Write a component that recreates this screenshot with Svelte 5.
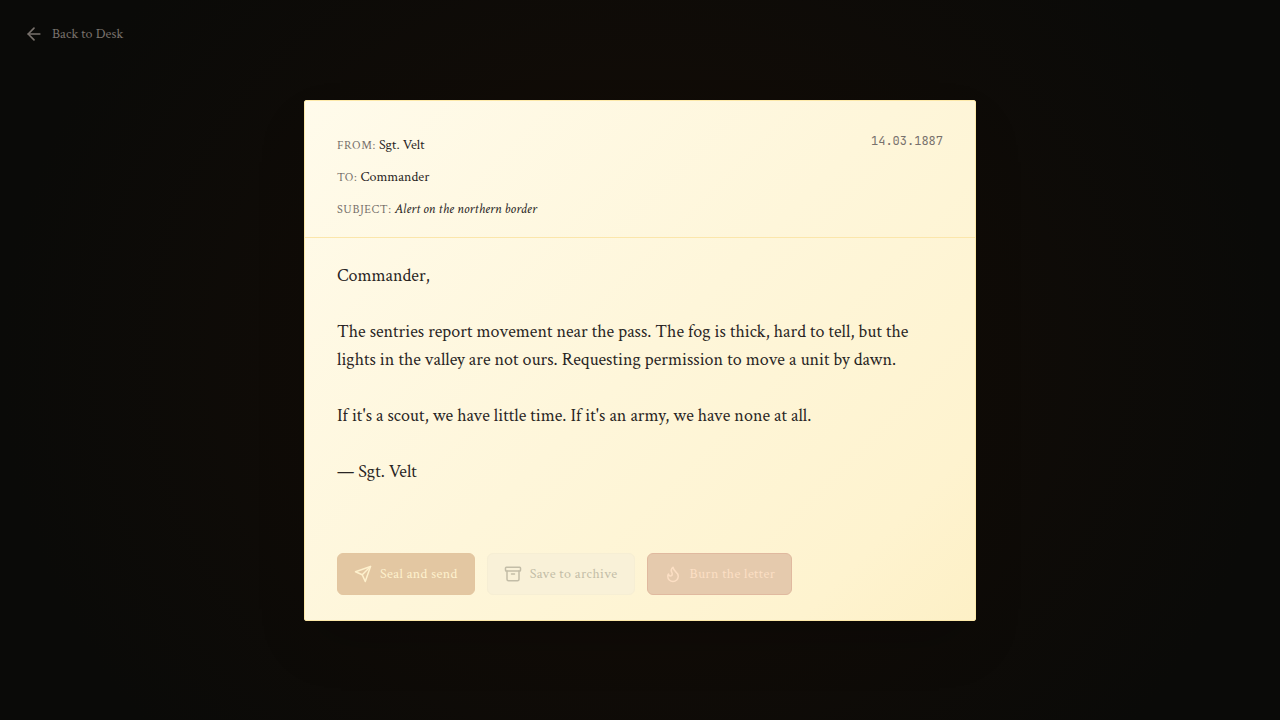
<script>
  const fields = [
    { label: 'From:', value: 'Sgt. Velt' },
    { label: 'To:', value: 'Commander' },
    { label: 'Subject:', value: 'Alert on the northern border', subject: true },
  ];

  const letter = `Commander,

The sentries report movement near the pass. The fog is thick, hard to tell, but the lights in the valley are not ours. Requesting permission to move a unit by dawn.

If it's a scout, we have little time. If it's an army, we have none at all.

— Sgt. Velt`;

  const actions = [
    { kind: 'send', label: 'Seal and send', paths: ['m22 2-7 20-4-9-9-4Z', 'M22 2 11 13'] },
    {
      kind: 'archive',
      label: 'Save to archive',
      paths: ['M3 3h18a1 1 0 0 1 1 1v3a1 1 0 0 1-1 1H3a1 1 0 0 1-1-1V4a1 1 0 0 1 1-1Z', 'M4 8v11a2 2 0 0 0 2 2h12a2 2 0 0 0 2-2V8', 'M10 12h4'],
    },
    {
      kind: 'burn',
      label: 'Burn the letter',
      paths: ['M8.5 14.5A2.5 2.5 0 0 0 11 12c0-1.38-.5-2-1-3-1.072-2.143-.224-4.054 2-6 .5 2.5 2 4.9 4 6.5 2 1.6 3 3.5 3 5.5a7 7 0 1 1-14 0c0-1.153.433-2.294 1-3a2.5 2.5 0 0 0 2.5 2.5z'],
    },
  ];
</script>

<div class="page">
  <button class="back" type="button">
    <svg viewBox="0 0 24 24" aria-hidden="true"><path d="m12 19-7-7 7-7" /><path d="M19 12H5" /></svg>
    Back to Desk
  </button>

  <main class="letter">
    <header>
      <div class="fields">
        {#each fields as field}
          <p><span class="label">{field.label}</span> <span class="value" class:subject={field.subject}>{field.value}</span></p>
        {/each}
      </div>
      <time datetime="1887-03-14">14.03.1887</time>
    </header>

    <div class="body">{letter}</div>

    <footer>
      {#each actions as action}
        <button class="action {action.kind}" type="button">
          <svg viewBox="0 0 24 24" aria-hidden="true">
            {#each action.paths as d}<path {d} />{/each}
          </svg>
          {action.label}
        </button>
      {/each}
    </footer>
  </main>
</div>

<style>
  :global(body) {
    margin: 0;
    background: #0a0a08;
  }

  .page {
    position: relative;
    box-sizing: border-box;
    min-height: 100vh;
    padding: 32px;
    display: flex;
    align-items: center;
    justify-content: center;
    font-family: 'Crimson Text', 'Liberation Serif', serif;
    background: radial-gradient(ellipse 50% 80% at center, #160d06 0%, #0a0a08 100%);
  }

  svg {
    width: 18px;
    height: 18px;
    flex: none;
    fill: none;
    stroke: currentColor;
    stroke-width: 2;
    stroke-linecap: round;
    stroke-linejoin: round;
  }

  button {
    display: flex;
    align-items: center;
    gap: 8px;
    font-family: inherit;
    font-size: 14px;
    line-height: 20px;
    cursor: pointer;
  }

  .back {
    position: absolute;
    top: 24px;
    left: 24px;
    padding: 0;
    border: 0;
    background: none;
    color: #78716c;
  }

  .back svg {
    width: 20px;
    height: 20px;
  }

  .letter {
    box-sizing: border-box;
    width: 100%;
    max-width: 672px;
    border: 1px solid #fde9a9;
    border-radius: 2px;
    background: linear-gradient(135deg, #fffbeb 0%, #fef6da 50%, #fef3cf 85%, #fdf0c6 100%);
    box-shadow: 0 25px 50px -12px rgba(0, 0, 0, 0.25);
  }

  header {
    display: flex;
    justify-content: space-between;
    align-items: flex-start;
    padding: 32px 32px 16px;
    border-bottom: 1px solid #fbe6ab;
  }

  .fields {
    display: grid;
    gap: 8px;
  }

  p {
    margin: 0;
    font-size: 14px;
    line-height: 24px;
    color: #292524;
  }

  .label {
    font-size: 12px;
    line-height: 16px;
    letter-spacing: 0.05em;
    text-transform: uppercase;
    color: #78716c;
  }

  .subject {
    font-style: italic;
  }

  time {
    font-family: 'JetBrains Mono', 'Liberation Mono', monospace;
    font-size: 12px;
    line-height: 16px;
    color: #78716c;
  }

  .body {
    padding: 24px 32px 43px;
    font-size: 18px;
    line-height: 28px;
    white-space: pre-wrap;
    color: #292524;
  }

  footer {
    display: flex;
    flex-wrap: wrap;
    gap: 12px;
    padding: 24px 32px 25px;
  }

  .action {
    padding: 10px 16px;
    border: 1px solid;
    border-radius: 6px;
    letter-spacing: 0.025em;
  }

  .send {
    color: #fef1cd;
    background: #e3c7a2;
    border-color: #e3c6a0;
  }

  .archive {
    color: #c3bda7;
    background: #f9f1d8;
    border-color: #f6eed4;
  }

  .burn {
    color: #fcdfc4;
    background: #e5caad;
    border-color: #e0b99f;
  }
</style>
